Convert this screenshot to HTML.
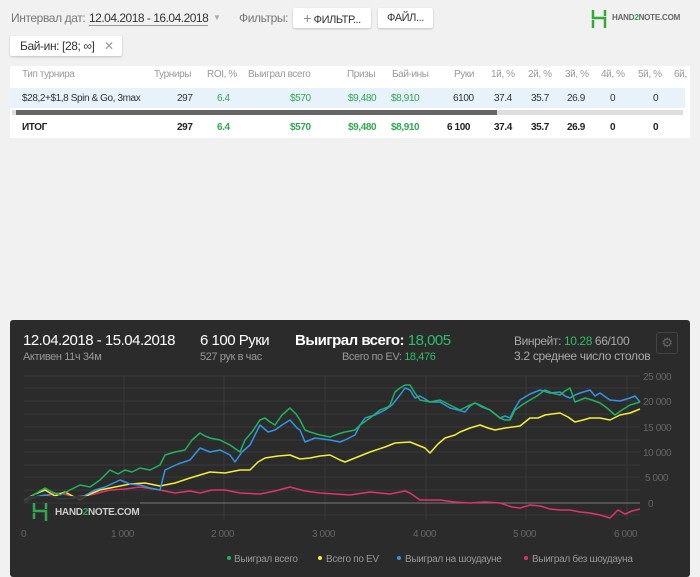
<!DOCTYPE html>
<html><head><meta charset="utf-8"><style>
body{margin:0;width:700px;height:577px;background:#f1f1f1;font-family:"Liberation Sans",sans-serif;position:relative;overflow:hidden;font-size:12px;letter-spacing:-0.4px}
.a{position:absolute;white-space:nowrap}
.btn{position:absolute;background:#fff;border-radius:2px;box-shadow:0 1px 2px rgba(0,0,0,.2);font-size:11px;color:#333;height:20px;line-height:20px;text-align:center;white-space:nowrap}
.g{color:#2fa84f}
.h{font-size:10px;letter-spacing:-0.4px}
</style></head><body>
<div class="a" style="left:11px;top:11px;color:#777;font-size:12px">Интервал дат:</div>
<div class="a" style="left:89px;top:11px;color:#333;font-size:12px;border-bottom:1px solid #999;letter-spacing:-0.5px">12.04.2018 - 16.04.2018</div>
<div class="a" style="left:213px;top:13px;color:#aaa;font-size:8px">▼</div>
<div class="a" style="left:239px;top:11px;color:#777;font-size:12px">Фильтры:</div>
<div class="btn" style="left:293px;top:8px;width:78px"><span style="color:#888;font-size:14px">+</span> ФИЛЬТР...</div>
<div class="btn" style="left:378px;top:8px;width:55px">ФАЙЛ...</div>
<svg class="a" style="left:591px;top:10px" width="16" height="18"><path d="M2 0v8h12v10M2 10v8M14 0v6" stroke="#3a3" stroke-width="2.5" fill="none"/></svg>
<div class="a" style="left:612px;top:13px;font-size:8px;font-weight:bold;color:#666;letter-spacing:-0.2px">HAND<span class="g">2</span>NOTE.COM</div>
<div class="btn" style="left:10px;top:36px;width:112px;text-align:left;font-size:12px"><span style="position:absolute;left:10px">Бай-ин: [28; ∞]</span><span style="position:absolute;left:94px;color:#999">✕</span></div>
<div class="a" style="left:10px;top:66px;width:680px;height:72px;background:#fff"></div>
<div class="a h" style="left:10px;top:69px;width:680px;color:#999">
<span class="a" style="left:12px">Тип турнира</span><span class="a" style="left:144px">Турниры</span><span class="a" style="left:197px">ROI, %</span><span class="a" style="left:238px">Выиграл всего</span><span class="a" style="left:337px">Призы</span><span class="a" style="left:382px">Бай-ины</span><span class="a" style="left:444px">Руки</span><span class="a" style="left:481px">1й, %</span><span class="a" style="left:518px">2й, %</span><span class="a" style="left:555px">3й, %</span><span class="a" style="left:591px">4й, %</span><span class="a" style="left:628px">5й, %</span><span class="a" style="left:664px">6й,</span></div>
<div class="a" style="left:10px;top:88px;width:675px;height:20px;background:#e8f2fb"></div>
<div class="a h" style="left:10px;top:93px;width:680px;color:#333">
<span class="a" style="left:12px">$28,2+$1,8 Spin &amp; Go, 3max</span><span class="a" style="left:167px">297</span><span class="a g" style="left:207px">6.4</span><span class="a g" style="left:280px">$570</span><span class="a g" style="left:338px">$9,480</span><span class="a g" style="left:381px">$8,910</span><span class="a" style="left:443px">6100</span><span class="a" style="left:484px">37.4</span><span class="a" style="left:521px">35.7</span><span class="a" style="left:557px">26.9</span><span class="a" style="left:600px">0</span><span class="a" style="left:643px">0</span></div>
<div class="a" style="left:12px;top:110px;width:671px;height:5px;background:#ddd"></div>
<div class="a" style="left:16px;top:110px;width:481px;height:5px;background:#666"></div>
<div class="a h" style="left:10px;top:122px;width:680px;color:#222;font-weight:bold">
<span class="a" style="left:12px">ИТОГ</span><span class="a" style="left:167px">297</span><span class="a g" style="left:207px">6.4</span><span class="a g" style="left:280px">$570</span><span class="a g" style="left:338px">$9,480</span><span class="a g" style="left:381px">$8,910</span><span class="a" style="left:437px">6 100</span><span class="a" style="left:484px">37.4</span><span class="a" style="left:521px">35.7</span><span class="a" style="left:557px">26.9</span><span class="a" style="left:600px">0</span><span class="a" style="left:643px">0</span></div>

<div class="a" style="left:10px;top:320px;width:680px;height:257px;background:#2b2b2b;border-radius:3px"></div>
<div class="a" style="left:23px;top:332px;color:#fff;font-size:15px;letter-spacing:-0.5px">12.04.2018 - 15.04.2018</div>
<div class="a" style="left:23px;top:351px;color:#999;font-size:11px">Активен 11ч 34м</div>
<div class="a" style="left:200px;top:332px;color:#fff;font-size:15px;letter-spacing:-0.5px">6 100 Руки</div>
<div class="a" style="left:200px;top:351px;color:#999;font-size:11px">527 рук в час</div>
<div class="a" style="left:295px;top:332px;color:#fff;font-size:15px;font-weight:bold;letter-spacing:-0.5px">Выиграл всего: <span style="color:#2ebd6b;font-weight:normal">18,005</span></div>
<div class="a" style="left:342px;top:351px;color:#999;font-size:11px">Всего по EV: <span style="color:#2ebd6b">18,476</span></div>
<div class="a" style="left:514px;top:334px;color:#aaa;font-size:12px">Винрейт: <span style="color:#2ebd6b">10.28</span> 66/100</div>
<div class="a" style="left:514px;top:349px;color:#aaa;font-size:12px;letter-spacing:-0.3px">3.2 среднее число столов</div>
<div class="a" style="left:656px;top:332px;width:20px;height:20px;border:1px solid #444;border-radius:3px;color:#666;text-align:center;line-height:20px;font-size:13px">⚙</div>
<svg class="a" style="left:0;top:0" width="700" height="577">
<g stroke="#3a3a3a" stroke-width="1">
<path d="M24 376H640M24 388H640M24 401H640M24 414H640M24 427H640M24 440H640M24 452H640M24 465H640M24 477H640M24 490H640M24 515H640M124 376V520M224 376V520M325 376V520M426 376V520M526 376V520M627 376V520"/></g>
<path d="M24 503H640" stroke="#777" stroke-width="1"/>
<g font-size="10" fill="#666" font-family="Liberation Sans" letter-spacing="-0.4">
<text x="643" y="380">25 000</text><text x="643" y="405">20 000</text><text x="643" y="431">15 000</text><text x="643" y="456">10 000</text><text x="645" y="481">5 000</text><text x="648" y="507">0</text>
<text x="21" y="537">0</text><text x="111" y="537">1 000</text><text x="211" y="537">2 000</text><text x="312" y="537">3 000</text><text x="413" y="537">4 000</text><text x="513" y="537">5 000</text><text x="614" y="537">6 000</text></g>
<g fill="none" stroke-width="1.5" stroke-linejoin="round">
<polyline stroke="#e0336e" points="24,500 40,496 60,493 75,497 90,495 110,490 125,489 140,487 160,490 175,493 190,491 200,493 212,490 225,490 240,493 260,494 275,491 290,487 305,491 320,493 335,494 350,495 370,492 390,494 405,491 410,493 420,500 440,500 455,502 470,503 485,502 500,503 512,507 520,508 530,505 540,506 550,509 560,510 570,510 580,512 590,513 600,515 610,518 618,510 625,514 632,511 640,509"/>
<polyline stroke="#f3ef38" points="24,500 35,494 45,490 55,496 65,492 80,500 90,494 100,490 115,487 130,484 145,483 160,486 175,483 190,478 200,475 210,472 225,473 240,470 250,470 258,462 265,458 278,456 290,455 300,459 310,458 320,456 330,455 340,460 345,462 355,458 370,452 385,447 395,443 410,442 420,446 425,448 430,453 438,444 445,438 455,435 460,432 470,428 480,425 488,428 495,430 505,428 520,426 530,418 538,418 545,415 552,414 560,413 568,417 575,422 583,420 590,418 600,418 610,420 620,415 630,413 635,411 640,409"/>
<polyline stroke="#3394e6" points="24,503 35,497 45,495 60,499 80,498 95,490 105,487 120,480 130,484 140,485 150,488 160,490 165,470 178,464 190,460 200,448 210,452 220,450 230,455 235,462 242,452 250,445 255,435 260,425 268,432 275,430 282,425 290,420 297,428 300,430 305,442 315,438 330,440 340,442 345,440 355,435 360,425 365,418 375,415 385,410 392,405 400,395 405,388 410,390 415,398 420,396 430,402 440,402 450,408 458,410 465,412 470,406 475,403 482,407 490,410 500,418 505,416 510,418 515,408 520,400 530,394 540,390 550,393 560,392 565,396 570,398 575,395 580,393 590,390 595,396 600,393 607,398 610,400 620,401 630,398 635,396 640,402"/>
<polyline stroke="#1fb360" points="24,502 35,494 45,488 52,492 60,495 70,490 80,485 90,487 100,480 110,470 118,474 125,470 132,472 140,468 150,470 160,465 165,455 175,452 185,450 192,440 200,433 205,436 210,438 220,440 230,445 240,452 245,440 252,432 260,420 265,418 270,422 275,425 282,415 290,408 296,414 300,420 305,430 310,432 320,435 330,437 338,434 345,432 355,430 360,425 370,418 380,410 388,407 390,405 395,392 400,388 405,385 410,385 415,393 420,400 430,402 440,400 450,405 460,410 468,406 475,403 482,406 490,410 500,418 505,420 510,420 515,410 522,405 530,400 537,396 545,390 552,393 560,395 565,391 570,388 575,402 585,398 592,400 600,403 607,408 615,415 622,410 630,405 640,402"/>
</g>
<rect x="22" y="496" width="118" height="24" fill="#2b2b2b" opacity=".85"/>
<path d="M34 503v8h12v10M34 513v6M46 503v6" stroke="#2fa84f" stroke-width="2.5" fill="none"/>
<text x="55" y="515" font-size="10" font-weight="bold" fill="#ccc" font-family="Liberation Sans" letter-spacing="-0.3">HAND<tspan fill="#2fa84f">2</tspan>NOTE.COM</text>
<g font-size="10" fill="#999" font-family="Liberation Sans" letter-spacing="-0.3">
<circle cx="229" cy="558" r="2" fill="#1fb360"/><text x="234" y="562">Выиграл всего</text>
<circle cx="320" cy="558" r="2" fill="#f3ef38"/><text x="326" y="562">Всего по EV</text>
<circle cx="399" cy="558" r="2" fill="#3394e6"/><text x="405" y="562">Выиграл на шоудауне</text>
<circle cx="526" cy="558" r="2" fill="#e0336e"/><text x="532" y="562">Выиграл без шоудауна</text></g>
</svg>
</body></html>
